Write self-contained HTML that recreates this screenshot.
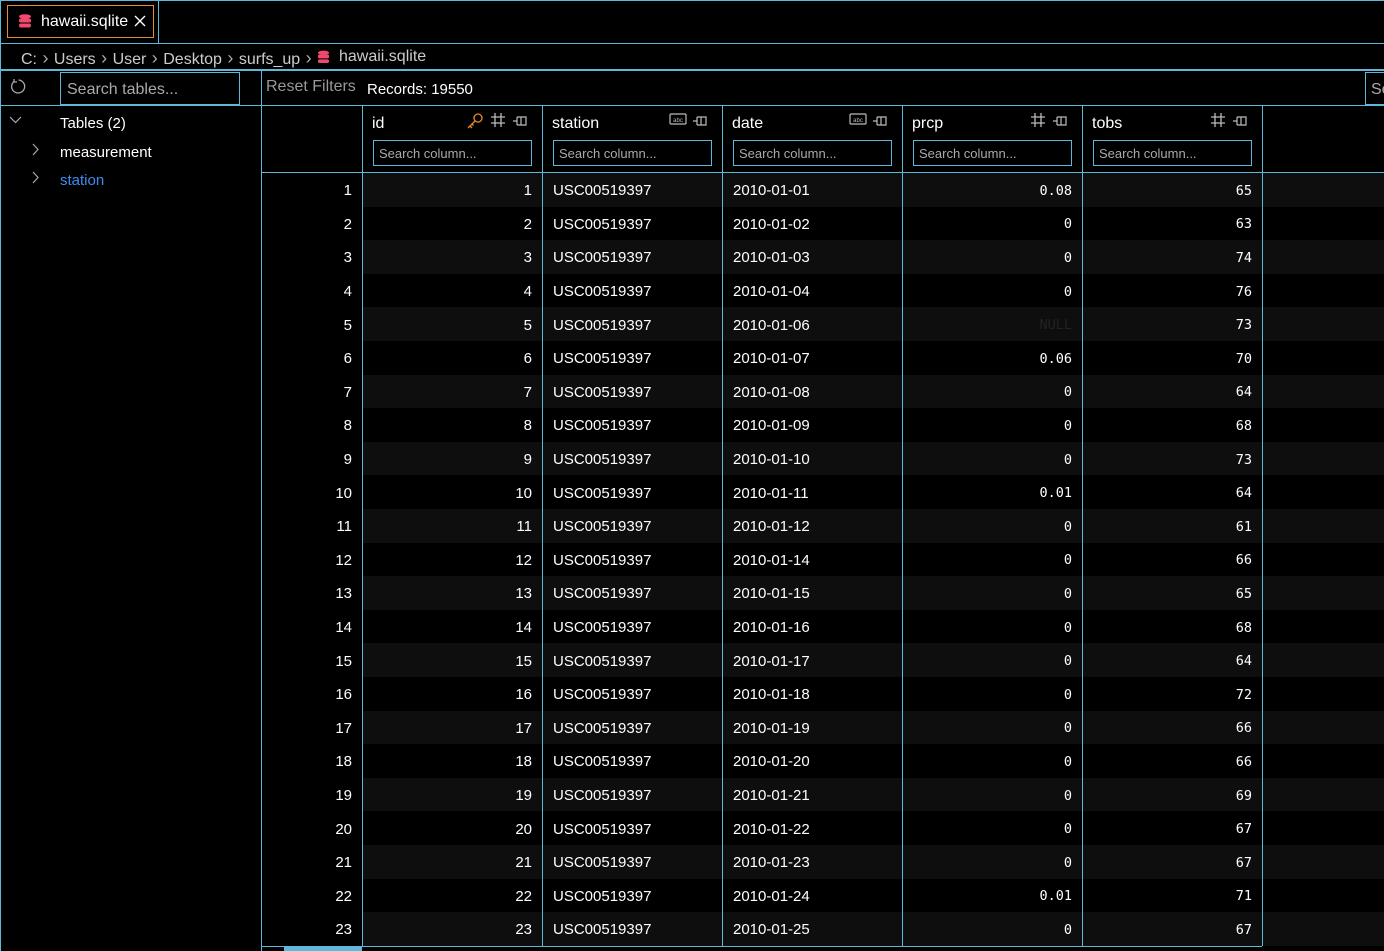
<!DOCTYPE html>
<html><head><style>
*{box-sizing:border-box;margin:0;padding:0}
body{width:1384px;height:951px;background:#000;color:#fff;font-family:"Liberation Sans",sans-serif;font-size:15px;overflow:hidden;position:relative}
.b{position:absolute;background:#5fb7da}
.abs{position:absolute}
.row{position:absolute;left:262px;width:1122px;height:33.6px;display:flex}
.row div{height:100%;display:flex;align-items:center;border-left:1px solid #5fb7da;padding-top:2px}
.rn{width:100px;justify-content:flex-end;padding-right:10px;border-left:none!important;background:#000}
.c{width:180px;padding:0 10px}
.r{justify-content:flex-end}
.m{font-family:"DejaVu Sans Mono","Liberation Mono",monospace;font-size:13.5px}
.g .c{background:#0e0e0e}
.inp{position:absolute;border:1px solid #5fb7da;height:26px;font-size:13px;color:#aaa;padding:5px 5px;width:159px}
.hd{position:absolute;top:115px;font-size:16px}
.ic{position:absolute;top:112px}
.ch{color:#aaa;font-size:18px}
</style></head><body>
<div class="b" style="left:0;top:0;width:1384px;height:1px"></div>
<div class="b" style="left:0;top:0;width:1px;height:951px"></div>
<div class="b" style="left:0;top:43px;width:1384px;height:1px"></div>
<div class="b" style="left:0;top:69px;width:1384px;height:2px"></div>
<div class="b" style="left:158px;top:0;width:1px;height:43px"></div>
<div class="b" style="left:261px;top:71px;width:1px;height:880px"></div>
<div class="b" style="left:0;top:105px;width:1384px;height:1px"></div>
<div class="b" style="left:262px;top:172px;width:1122px;height:1px"></div>
<div class="b" style="left:262px;top:946px;width:1000px;height:1px"></div>
<div class="b" style="left:284px;top:947px;width:78px;height:4px"></div>
<div class="abs" style="left:7px;top:5px;width:147px;height:33px;border:1px solid #e8892a"></div>
<svg class="abs" style="left:18px;top:14px" width="14" height="14" viewBox="0 0 14 14"><g fill="#f0486e"><ellipse cx="7" cy="2.5" rx="6" ry="2.3"/><rect x="1" y="4.5" width="12" height="4" rx="1.5"/><rect x="1" y="9.5" width="12" height="4" rx="2"/></g></svg>
<div class="abs" style="left:41px;top:13px;font-size:16px">hawaii.sqlite</div>
<svg class="abs" style="left:134px;top:15px" width="12" height="12" viewBox="0 0 12 12"><path d="M1 1L11 11M11 1L1 11" stroke="#fff" stroke-width="1.4"/></svg>
<div class="abs" style="left:21px;top:48px;font-size:16px;color:#ccc;white-space:nowrap;word-spacing:1px">C: <span class="ch">›</span> Users <span class="ch">›</span> User <span class="ch">›</span> Desktop <span class="ch">›</span> surfs_up <span class="ch">›</span></div>
<svg class="abs" style="left:317px;top:50px" width="13" height="14" viewBox="0 0 14 14"><g fill="#f0486e"><ellipse cx="7" cy="2.5" rx="6" ry="2.3"/><rect x="1" y="4.5" width="12" height="4" rx="1.5"/><rect x="1" y="9.5" width="12" height="4" rx="2"/></g></svg>
<div class="abs" style="left:339px;top:48px;font-size:16px;color:#ccc">hawaii.sqlite</div>
<svg class="abs" style="left:10px;top:78px" width="17" height="17" viewBox="0 0 17 17"><path d="M4 3.5A6.5 6.5 0 1 0 8.5 2" fill="none" stroke="#aaa" stroke-width="1.3"/><path d="M4 1v3h3" fill="none" stroke="#aaa" stroke-width="1.3"/></svg>
<div class="abs" style="left:60px;top:72px;width:180px;height:33px;border:1px solid #5fb7da;color:#aaa;padding:8px 6px;font-size:16px">Search tables...</div>
<div class="abs" style="left:266px;top:78px;font-size:16px;color:#999">Reset Filters</div>
<div class="abs" style="left:367px;top:81px;font-size:15px">Records: 19550</div>
<div class="abs" style="left:1365px;top:72px;width:30px;height:33px;border:1px solid #5fb7da;color:#aaa;padding:8px 5px;font-size:16px">Se</div>
<svg class="abs" style="left:9px;top:116px" width="13" height="8" viewBox="0 0 13 8"><path d="M1 1l5.5 5.5L12 1" fill="none" stroke="#aaa" stroke-width="1.2"/></svg>
<div class="abs" style="left:60px;top:115px">Tables (2)</div>
<svg class="abs" style="left:32px;top:143px" width="7" height="13" viewBox="0 0 7 13"><path d="M1 1l5 5.5L1 12" fill="none" stroke="#aaa" stroke-width="1.2"/></svg>
<div class="abs" style="left:60px;top:144px">measurement</div>
<svg class="abs" style="left:32px;top:171px" width="7" height="13" viewBox="0 0 7 13"><path d="M1 1l5 5.5L1 12" fill="none" stroke="#aaa" stroke-width="1.2"/></svg>
<div class="abs" style="left:60px;top:172px;color:#3d8cf0">station</div>
<div class="b" style="left:362px;top:106px;width:1px;height:840px"></div>
<div class="b" style="left:542px;top:106px;width:1px;height:840px"></div>
<div class="b" style="left:722px;top:106px;width:1px;height:840px"></div>
<div class="b" style="left:902px;top:106px;width:1px;height:840px"></div>
<div class="b" style="left:1082px;top:106px;width:1px;height:840px"></div>
<div class="b" style="left:1262px;top:106px;width:1px;height:840px"></div>
<div class="hd" style="left:372px">id</div>
<div class="hd" style="left:552px">station</div>
<div class="hd" style="left:732px">date</div>
<div class="hd" style="left:912px">prcp</div>
<div class="hd" style="left:1092px">tobs</div>
<svg class="ic" style="left:466px" width="18" height="18" viewBox="0 0 18 18"><circle cx="12" cy="6" r="4" fill="none" stroke="#e8892a" stroke-width="1.3"/><path d="M9 9L2 16M4 14l2 2M6 12l1.5 1.5" fill="none" stroke="#e8892a" stroke-width="1.3"/></svg>
<svg width="0" height="0" style="position:absolute"><defs>
<symbol id="hash" viewBox="0 0 16 16"><path d="M5 1v14M11 1v14M1 5h14M1 11h14" stroke="#bbb" stroke-width="1.3"/></symbol>
<symbol id="pin" viewBox="0 0 16 16"><path d="M1 8h4M5 4v8M5 4h9v8H5M9 4v8" fill="none" stroke="#bbb" stroke-width="1.2"/></symbol>
<symbol id="abc" viewBox="0 0 18 14"><rect x="1" y="2" width="16" height="10" rx="1" fill="none" stroke="#bbb" stroke-width="1.2"/><text x="9" y="10" font-size="6" fill="#bbb" text-anchor="middle" font-family="Liberation Sans">abc</text></symbol>
</defs></svg>
<svg class="ic" style="left:490px" width="16" height="16"><use href="#hash"/></svg>
<svg class="ic" style="left:512px;top:113px" width="16" height="16"><use href="#pin"/></svg>
<svg class="ic" style="left:669px" width="18" height="14"><use href="#abc"/></svg>
<svg class="ic" style="left:692px;top:113px" width="16" height="16"><use href="#pin"/></svg>
<svg class="ic" style="left:849px" width="18" height="14"><use href="#abc"/></svg>
<svg class="ic" style="left:872px;top:113px" width="16" height="16"><use href="#pin"/></svg>
<svg class="ic" style="left:1030px" width="16" height="16"><use href="#hash"/></svg>
<svg class="ic" style="left:1052px;top:113px" width="16" height="16"><use href="#pin"/></svg>
<svg class="ic" style="left:1210px" width="16" height="16"><use href="#hash"/></svg>
<svg class="ic" style="left:1232px;top:113px" width="16" height="16"><use href="#pin"/></svg>
<div class="inp" style="left:373px;top:140px">Search column...</div>
<div class="inp" style="left:553px;top:140px">Search column...</div>
<div class="inp" style="left:733px;top:140px">Search column...</div>
<div class="inp" style="left:913px;top:140px">Search column...</div>
<div class="inp" style="left:1093px;top:140px">Search column...</div>
<div class="row g" style="top:173px"><div class="rn">1</div><div class="c r">1</div><div class="c">USC00519397</div><div class="c">2010-01-01</div><div class="c r m">0.08</div><div class="c r m">65</div><div class="c" style="width:122px"></div></div>
<div class="row" style="top:206.6px"><div class="rn">2</div><div class="c r">2</div><div class="c">USC00519397</div><div class="c">2010-01-02</div><div class="c r m">0</div><div class="c r m">63</div><div class="c" style="width:122px"></div></div>
<div class="row g" style="top:240.2px"><div class="rn">3</div><div class="c r">3</div><div class="c">USC00519397</div><div class="c">2010-01-03</div><div class="c r m">0</div><div class="c r m">74</div><div class="c" style="width:122px"></div></div>
<div class="row" style="top:273.8px"><div class="rn">4</div><div class="c r">4</div><div class="c">USC00519397</div><div class="c">2010-01-04</div><div class="c r m">0</div><div class="c r m">76</div><div class="c" style="width:122px"></div></div>
<div class="row g" style="top:307.4px"><div class="rn">5</div><div class="c r">5</div><div class="c">USC00519397</div><div class="c">2010-01-06</div><div class="c r m" style="color:#222">NULL</div><div class="c r m">73</div><div class="c" style="width:122px"></div></div>
<div class="row" style="top:341px"><div class="rn">6</div><div class="c r">6</div><div class="c">USC00519397</div><div class="c">2010-01-07</div><div class="c r m">0.06</div><div class="c r m">70</div><div class="c" style="width:122px"></div></div>
<div class="row g" style="top:374.6px"><div class="rn">7</div><div class="c r">7</div><div class="c">USC00519397</div><div class="c">2010-01-08</div><div class="c r m">0</div><div class="c r m">64</div><div class="c" style="width:122px"></div></div>
<div class="row" style="top:408.2px"><div class="rn">8</div><div class="c r">8</div><div class="c">USC00519397</div><div class="c">2010-01-09</div><div class="c r m">0</div><div class="c r m">68</div><div class="c" style="width:122px"></div></div>
<div class="row g" style="top:441.8px"><div class="rn">9</div><div class="c r">9</div><div class="c">USC00519397</div><div class="c">2010-01-10</div><div class="c r m">0</div><div class="c r m">73</div><div class="c" style="width:122px"></div></div>
<div class="row" style="top:475.4px"><div class="rn">10</div><div class="c r">10</div><div class="c">USC00519397</div><div class="c">2010-01-11</div><div class="c r m">0.01</div><div class="c r m">64</div><div class="c" style="width:122px"></div></div>
<div class="row g" style="top:509px"><div class="rn">11</div><div class="c r">11</div><div class="c">USC00519397</div><div class="c">2010-01-12</div><div class="c r m">0</div><div class="c r m">61</div><div class="c" style="width:122px"></div></div>
<div class="row" style="top:542.6px"><div class="rn">12</div><div class="c r">12</div><div class="c">USC00519397</div><div class="c">2010-01-14</div><div class="c r m">0</div><div class="c r m">66</div><div class="c" style="width:122px"></div></div>
<div class="row g" style="top:576.2px"><div class="rn">13</div><div class="c r">13</div><div class="c">USC00519397</div><div class="c">2010-01-15</div><div class="c r m">0</div><div class="c r m">65</div><div class="c" style="width:122px"></div></div>
<div class="row" style="top:609.8px"><div class="rn">14</div><div class="c r">14</div><div class="c">USC00519397</div><div class="c">2010-01-16</div><div class="c r m">0</div><div class="c r m">68</div><div class="c" style="width:122px"></div></div>
<div class="row g" style="top:643.4px"><div class="rn">15</div><div class="c r">15</div><div class="c">USC00519397</div><div class="c">2010-01-17</div><div class="c r m">0</div><div class="c r m">64</div><div class="c" style="width:122px"></div></div>
<div class="row" style="top:677px"><div class="rn">16</div><div class="c r">16</div><div class="c">USC00519397</div><div class="c">2010-01-18</div><div class="c r m">0</div><div class="c r m">72</div><div class="c" style="width:122px"></div></div>
<div class="row g" style="top:710.6px"><div class="rn">17</div><div class="c r">17</div><div class="c">USC00519397</div><div class="c">2010-01-19</div><div class="c r m">0</div><div class="c r m">66</div><div class="c" style="width:122px"></div></div>
<div class="row" style="top:744.2px"><div class="rn">18</div><div class="c r">18</div><div class="c">USC00519397</div><div class="c">2010-01-20</div><div class="c r m">0</div><div class="c r m">66</div><div class="c" style="width:122px"></div></div>
<div class="row g" style="top:777.8px"><div class="rn">19</div><div class="c r">19</div><div class="c">USC00519397</div><div class="c">2010-01-21</div><div class="c r m">0</div><div class="c r m">69</div><div class="c" style="width:122px"></div></div>
<div class="row" style="top:811.4px"><div class="rn">20</div><div class="c r">20</div><div class="c">USC00519397</div><div class="c">2010-01-22</div><div class="c r m">0</div><div class="c r m">67</div><div class="c" style="width:122px"></div></div>
<div class="row g" style="top:845px"><div class="rn">21</div><div class="c r">21</div><div class="c">USC00519397</div><div class="c">2010-01-23</div><div class="c r m">0</div><div class="c r m">67</div><div class="c" style="width:122px"></div></div>
<div class="row" style="top:878.6px"><div class="rn">22</div><div class="c r">22</div><div class="c">USC00519397</div><div class="c">2010-01-24</div><div class="c r m">0.01</div><div class="c r m">71</div><div class="c" style="width:122px"></div></div>
<div class="row g" style="top:912.2px"><div class="rn">23</div><div class="c r">23</div><div class="c">USC00519397</div><div class="c">2010-01-25</div><div class="c r m">0</div><div class="c r m">67</div><div class="c" style="width:122px"></div></div>
</body></html>
